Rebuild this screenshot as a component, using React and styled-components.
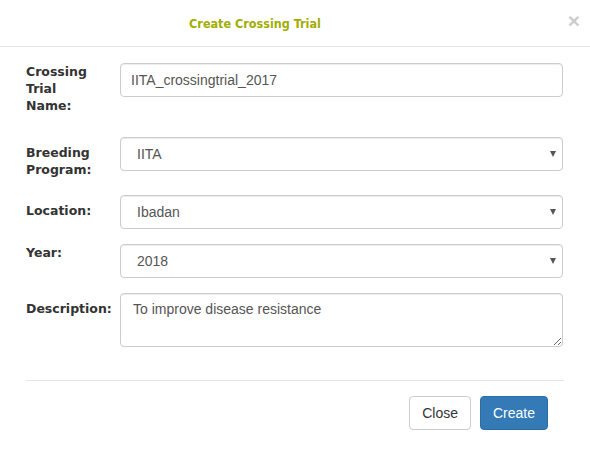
import React from "react";
import styled, { createGlobalStyle } from "styled-components";

const Global = createGlobalStyle`
  html, body { margin: 0; padding: 0; background: #fff; }
  body { font-family: "Liberation Sans", Arial, sans-serif; }
  * { box-sizing: border-box; }
`;

const Modal = styled.div`
  width: 590px;
  height: 456px;
  background: #fff;
  display: flex;
  flex-direction: column;
`;

const Header = styled.div`
  position: relative;
  height: 47px;
  border-bottom: 1px solid #e5e5e5;
  display: flex;
  align-items: center;
  justify-content: center;
  padding-right: 80px;
`;

const Title = styled.h4`
  margin: 0;
  font-family: "DejaVu Sans Condensed", "DejaVu Sans", sans-serif;
  font-weight: bold;
  font-size: 12.5px;
  color: #a1ad02;
  padding-top: 1px;
`;

const CloseX = styled.button`
  position: absolute;
  right: 10px;
  top: 10px;
  border: 0;
  background: none;
  padding: 0;
  font-family: "Liberation Sans", Arial, sans-serif;
  font-size: 21px;
  font-weight: bold;
  line-height: 1;
  color: #000;
  opacity: 0.2;
`;

const Body = styled.div`
  padding: 16px 26px 0 26px;
`;

const Row = styled.div`
  display: flex;
  align-items: flex-start;
  margin-bottom: ${(p) => p.$mb}px;
`;

const Label = styled.label`
  width: 94px;
  flex: none;
  padding-top: ${(p) => p.$pt}px;
  font-family: "DejaVu Sans", sans-serif;
  font-weight: bold;
  font-size: 12.5px;
  line-height: 17px;
  color: #333;
`;

const Field = styled.div`
  position: relative;
  flex: 1;
  margin-right: 1px;
`;

const baseControl = `
  display: block;
  width: 100%;
  border: 1px solid #ccc;
  border-radius: 4px;
  background: #fff;
  font-family: "Liberation Sans", Arial, sans-serif;
  font-size: 14px;
  color: #555;
  box-shadow: inset 0 1px 1px rgba(0,0,0,0.075);
  outline: none;
`;

const Input = styled.input`
  ${baseControl}
  height: 34px;
  padding: 6px 10px;
`;

const Select = styled.select`
  ${baseControl}
  height: 34px;
  padding: 6px 12px 6px 16px;
  appearance: none;
  -webkit-appearance: none;
`;

const Arrow = styled.span`
  position: absolute;
  right: 7px;
  top: 50%;
  transform: translateY(-50%);
  width: 0;
  height: 0;
  border-left: 3.5px solid transparent;
  border-right: 3.5px solid transparent;
  border-top: 6px solid #555;
  pointer-events: none;
`;

const TextArea = styled.textarea`
  ${baseControl}
  height: 54px;
  padding: 6px 12px;
  resize: vertical;
  line-height: 1.42857;
`;

const Divider = styled.hr`
  margin: 33px 0 0 0;
  border: 0;
  border-top: 1px solid #e5e5e5;
  width: 538px;
`;

const Footer = styled.div`
  display: flex;
  justify-content: flex-end;
  gap: 9px;
  padding: 15px 42px 0 0;
`;

const Button = styled.button`
  height: 34px;
  padding: 6px 12px;
  font-family: "Liberation Sans", Arial, sans-serif;
  font-size: 14px;
  line-height: 20px;
  border-radius: 4px;
  border: 1px solid ${(p) => (p.$primary ? "#2e6da4" : "#ccc")};
  background: ${(p) => (p.$primary ? "#337ab7" : "#fff")};
  color: ${(p) => (p.$primary ? "#fff" : "#333")};
  cursor: pointer;
`;

function SelectField({ value }) {
  return (
    <Field>
      <Select defaultValue={value}>
        <option>{value}</option>
      </Select>
      <Arrow />
    </Field>
  );
}

export default function App() {
  return (
    <>
      <Global />
      <Modal>
        <Header>
          <Title>Create Crossing Trial</Title>
          <CloseX aria-label="Close">×</CloseX>
        </Header>
        <Body>
          <Row $mb={23}>
            <Label $pt={0}>
              Crossing
              <br />
              Trial
              <br />
              Name:
            </Label>
            <Field>
              <Input defaultValue="IITA_crossingtrial_2017" />
            </Field>
          </Row>
          <Row $mb={17}>
            <Label $pt={7}>
              Breeding
              <br />
              Program:
            </Label>
            <SelectField value="IITA" />
          </Row>
          <Row $mb={15}>
            <Label $pt={7}>Location:</Label>
            <SelectField value="Ibadan" />
          </Row>
          <Row $mb={15}>
            <Label $pt={0}>Year:</Label>
            <SelectField value="2018" />
          </Row>
          <Row $mb={0}>
            <Label $pt={7}>Description:</Label>
            <Field>
              <TextArea defaultValue="To improve disease resistance" />
            </Field>
          </Row>
          <Divider />
        </Body>
        <Footer>
          <Button>Close</Button>
          <Button $primary>Create</Button>
        </Footer>
      </Modal>
    </>
  );
}
